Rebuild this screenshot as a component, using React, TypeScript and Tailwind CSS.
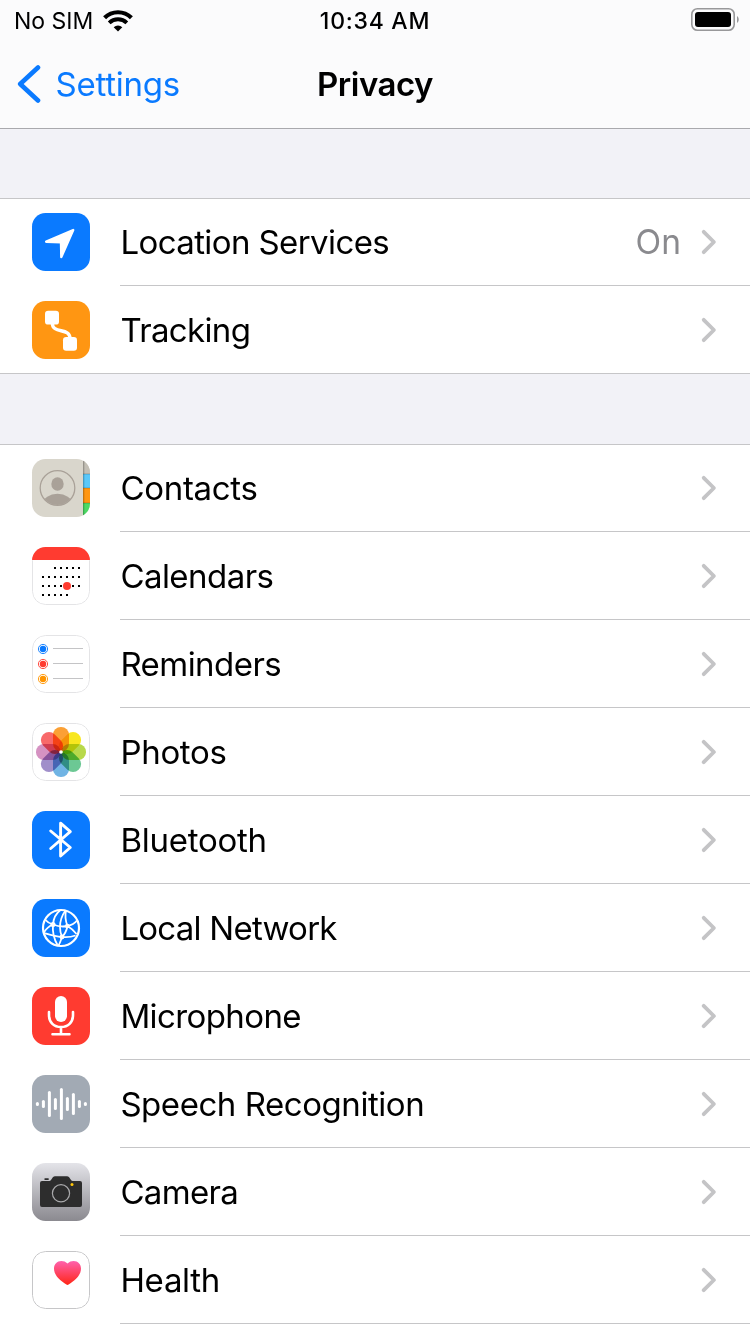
import type { ReactNode } from 'react';

interface RowProps {
  icon: ReactNode;
  label: string;
  value?: string;
  tracking?: string;
  last?: boolean;
}

// Rounded app tile that every list icon sits on
function Tile({ className, children }: { className: string; children: ReactNode }) {
  return (
    <div className={`mt-[15px] ml-8 h-[58px] w-[58px] shrink-0 overflow-hidden rounded-[13.5px] ${className}`}>
      <svg width="58" height="58" viewBox="0 0 58 58" fill="none">
        {children}
      </svg>
    </div>
  );
}

function LocationIcon() {
  return (
    <Tile className="bg-[#0a7aff]">
      <path d="M41.2 17 L14.2 28.7 L29 29.3 L29.3 44 Z" fill="#fff" stroke="#fff" strokeWidth="2.4" strokeLinejoin="round" />
    </Tile>
  );
}

function TrackingIcon() {
  return (
    <Tile className="bg-[#ff9612]">
      <rect x="13" y="9.8" width="14" height="13.8" rx="3.2" fill="#fff" />
      <rect x="31" y="36" width="14" height="13.8" rx="3.2" fill="#fff" />
      <path d="M20.3 22 C20.3 33.5 38 26 38 37.5" stroke="#fff" strokeWidth="3.4" />
    </Tile>
  );
}

function ContactsIcon() {
  return (
    <Tile className="bg-[#d9d6cc]">
      <defs>
        <clipPath id="contact-ring">
          <circle cx="25.5" cy="29" r="17" />
        </clipPath>
        <linearGradient id="tab-shade" x1="0" x2="1" y1="0" y2="0">
          <stop offset="0" stopColor="#000" stopOpacity="0.3" />
          <stop offset="1" stopColor="#000" stopOpacity="0" />
        </linearGradient>
      </defs>
      <rect x="51" width="7" height="15" fill="#c3bfb5" />
      <rect x="51" y="15" width="7" height="14" fill="#5ac8fa" />
      <rect x="51" y="29" width="7" height="15" fill="#ff9612" />
      <rect x="51" y="44" width="7" height="14" fill="#4cd964" />
      <path d="M51 15H58M51 29H58M51 44H58" stroke="#000" strokeOpacity="0.25" strokeWidth="0.8" />
      <rect x="51" width="2" height="58" fill="url(#tab-shade)" />
      <circle cx="25.5" cy="29" r="17.3" stroke="#a9a198" strokeWidth="1.3" />
      <ellipse cx="25.5" cy="25" rx="6.2" ry="6.8" fill="#a9a198" />
      <ellipse cx="25.5" cy="44.5" rx="14.5" ry="9.7" fill="#a9a198" clipPath="url(#contact-ring)" />
    </Tile>
  );
}

function CalendarIcon() {
  const rows = [
    { y: 21, from: 2, to: 6 },
    { y: 30, from: 0, to: 6 },
    { y: 39, from: 0, to: 6 },
    { y: 48, from: 0, to: 4 },
  ];

  return (
    <Tile className="bg-white">
      <rect x="0.5" y="0.5" width="57" height="57" rx="13" stroke="#e4e4e6" />
      <rect width="58" height="13" fill="#ff3b30" />
      {rows.map((row) =>
        Array.from({ length: row.to - row.from + 1 }, (_, i) => (
          <rect key={`${row.y}-${i}`} x={10 + (row.from + i) * 6} y={row.y - 1} width="2" height="2" fill="#000" />
        ))
      )}
      <circle cx="35" cy="39" r="4" fill="#ff3b30" />
    </Tile>
  );
}

function RemindersIcon() {
  const items = [
    { y: 14, color: '#0a7aff' },
    { y: 29, color: '#ff3b30' },
    { y: 44, color: '#ff9500' },
  ];

  return (
    <Tile className="bg-white">
      <rect x="0.5" y="0.5" width="57" height="57" rx="13" stroke="#e4e4e6" />
      {items.map((item) => (
        <g key={item.y}>
          <circle cx="11" cy={item.y} r="4.6" stroke={item.color} strokeWidth="0.9" />
          <circle cx="11" cy={item.y} r="3.2" fill={item.color} />
          <path d={`M21 ${item.y - 0.5}H51`} stroke="#c4c4c6" />
        </g>
      ))}
    </Tile>
  );
}

function PhotosIcon() {
  const petals = ['#fba035', '#f8e71f', '#b8d94a', '#6cc894', '#70b4e4', '#a08fca', '#d592c2', '#f8696a'];

  return (
    <Tile className="bg-white">
      <rect x="0.5" y="0.5" width="57" height="57" rx="13" stroke="#e4e4e6" />
      {petals.map((color, i) => (
        <rect
          key={color}
          className="mix-blend-multiply"
          x="21"
          y="4"
          width="16"
          height="24.5"
          rx="7.8"
          fill={color}
          transform={`rotate(${i * 45} 29 29)`}
        />
      ))}
      <circle cx="29" cy="29" r="1.8" fill="#fff" />
    </Tile>
  );
}

function BluetoothIcon() {
  return (
    <Tile className="bg-[#0a7aff]">
      <path
        d="M18.7 20 L38.3 36.5 L28.6 45 V12.2 L38.3 20.7 L18.7 37.5"
        stroke="#fff"
        strokeWidth="2.9"
        strokeLinecap="round"
        strokeLinejoin="round"
      />
    </Tile>
  );
}

function NetworkIcon() {
  return (
    <Tile className="bg-[#0a7aff]">
      <g stroke="#fff" strokeWidth="1.8">
        <circle cx="29" cy="29" r="18" strokeWidth="2.2" />
        <path d="M28.5 11 C24.5 14 21.5 19 21 25.5 C20.3 33 22 40 25.5 46" />
        <path d="M33.5 11.5 C29.5 17 28 22 28 28 C28 32 28.7 35 30 38" />
        <path d="M34 11.5 C33 16 33.5 22 35.5 27 C34.5 32 33 35 30 38 C29 41 28 44 26.5 46.5" />
        <path d="M13 20.5 C15 23 17.5 24.5 21 25.5 C26 27.5 31 28 35.5 27 C40 26 43 24 45 21.5" />
        <path d="M12 34 C17 35.5 22.5 37.5 30 38 C35 38.5 39.5 38 43.5 36.5" />
        <path d="M21 25.5 C17 27 14 30 11.8 33.5 M35.5 27 C39 29 42 32 44.5 35" />
      </g>
      <g fill="#fff">
        <circle cx="21" cy="25.5" r="2.5" />
        <circle cx="35.3" cy="27" r="2.3" />
        <circle cx="30" cy="38" r="2.4" />
      </g>
    </Tile>
  );
}

function MicrophoneIcon() {
  return (
    <Tile className="bg-[#ff3b30]">
      <rect x="23" y="9" width="12" height="26" rx="6" fill="#fff" />
      <path
        d="M17 25 V28 C17 35.5 22 40 29 40 C36 40 41 35.5 41 28 V25 M29 40 V47 M20.5 47.3 H37.5"
        stroke="#fff"
        strokeWidth="2.6"
        strokeLinecap="round"
      />
    </Tile>
  );
}

function SpeechIcon() {
  const bars = [4, 8, 26, 12, 32, 14, 22, 8, 4];

  return (
    <Tile className="bg-[#a2aab4]">
      {bars.map((height, i) => (
        <rect key={i} x={3.9 + i * 6} y={29 - height / 2} width="3" height={height} rx="1.5" fill="#fff" />
      ))}
    </Tile>
  );
}

function CameraIcon() {
  return (
    <Tile className="bg-linear-to-b from-[#e4e4e9] to-[#8b8a90]">
      <path
        d="M10 18 H17.5 C19.5 18 20 13.2 23 13.2 H35 C38 13.2 38.5 18 40.5 18 H48 Q50 18 50 20 V42 Q50 44 48 44 H10 Q8 44 8 42 V20 Q8 18 10 18 Z"
        fill="#2d2d2d"
      />
      <rect x="12.3" y="15.2" width="4.6" height="1.8" rx="0.9" fill="#2d2d2d" />
      <circle cx="29" cy="30.3" r="8.6" stroke="#a9a9ab" strokeWidth="1.2" />
      <circle cx="40" cy="21.5" r="1.5" fill="#ffc60a" />
    </Tile>
  );
}

function HealthIcon() {
  return (
    <Tile className="bg-white">
      <defs>
        <linearGradient id="heart" x1="0" x2="0" y1="0" y2="1">
          <stop offset="0" stopColor="#ff61ad" />
          <stop offset="1" stopColor="#ff2616" />
        </linearGradient>
      </defs>
      <rect x="0.5" y="0.5" width="57" height="57" rx="13" stroke="#c6c6c8" />
      <path
        d="M35.5 12.6 C37.2 10.8 39.3 10 41.6 10 C46 10 49 13.3 49 17.5 C49 25 42 30 36.6 33.6 Q35.5 34.3 34.4 33.6 C29 30 22 25 22 17.5 C22 13.3 25 10 29.4 10 C31.7 10 33.8 10.8 35.5 12.6 Z"
        fill="url(#heart)"
      />
    </Tile>
  );
}

function Chevron() {
  return (
    <svg className="mr-[33px] shrink-0" width="16" height="26" viewBox="0 0 16 26" fill="none">
      <path d="M2.7 2.8 L12.9 13 L2.7 23.2" stroke="#c4c4c6" strokeWidth="3.8" strokeLinecap="round" strokeLinejoin="round" />
    </svg>
  );
}

function Row({ icon, label, value, tracking = 'tracking-[-0.3px]', last = false }: RowProps) {
  return (
    <li className={`flex h-[88px] first:-mt-px ${last ? 'border-b border-[#c6c6c8]' : ''}`}>
      {icon}
      <div className={`ml-[30px] flex flex-1 items-center ${last ? '' : 'border-b border-[#c6c6c8]'}`}>
        <span className={`flex-1 pl-[0.4px] text-[33px] leading-[40px] ${tracking}`}>{label}</span>
        {value && <span className="mr-5 text-[33.5px] leading-[40px] text-[#8a8a8e]">{value}</span>}
        <Chevron />
      </div>
    </li>
  );
}

function StatusBar() {
  return (
    <div className="flex h-10 items-center justify-between pt-0.5">
      <div className="flex w-[250px] items-center pl-[14px]">
        <span className="text-[23px] leading-10">No SIM</span>
        <svg className="ml-[10px]" width="30" height="22" viewBox="0 0 30 22" fill="none">
          <path d="M1.6 7.8 A19 19 0 0 1 28.4 7.8" stroke="#000" strokeWidth="4.2" />
          <path d="M6.2 12.8 A12.6 12.6 0 0 1 23.8 12.8" stroke="#000" strokeWidth="3.9" />
          <path d="M15 21.6 L10.7 17.3 A6.2 6.2 0 0 1 19.3 17.3 Z" fill="#000" />
        </svg>
      </div>
      <span className="text-[23px] leading-10 font-medium tracking-[0.75px]">10:34 AM</span>
      <div className="-mt-0.5 flex w-[250px] justify-end pr-[11px]">
        <svg width="48" height="24" viewBox="0 0 48 24" fill="none">
          <rect x="0.8" y="0.8" width="42.4" height="21.4" rx="5.6" stroke="#98989a" strokeWidth="1.6" />
          <rect x="4" y="4" width="36" height="15" rx="3" fill="#000" />
          <path d="M46 8 C48.3 9.5 48.3 13.5 46 15 Z" fill="#98989a" />
        </svg>
      </div>
    </div>
  );
}

function NavBar() {
  return (
    <div className="grid h-[88px] grid-cols-3 items-center">
      <div className="flex items-center pl-[17px] text-[#0a7aff]">
        <svg width="24" height="38" viewBox="0 0 24 38" fill="none">
          <path d="M21 2.5 L3.2 19 L21 35.5" stroke="currentColor" strokeWidth="4.6" strokeLinecap="round" strokeLinejoin="round" />
        </svg>
        <span className="ml-[14.5px] text-[33px] leading-10 tracking-[-0.25px]">Settings</span>
      </div>
      <h1 className="text-center text-[33px] leading-10 font-semibold tracking-[-0.5px]">Privacy</h1>
    </div>
  );
}

export default function App() {
  return (
    <div className="h-[1334px] w-[750px] overflow-hidden bg-[#f2f2f7] font-['Inter','Liberation_Sans',sans-serif] text-black">
      <header className="h-[129px] border-b border-[#a9a9ad] bg-[#fbfbfc]">
        <StatusBar />
        <NavBar />
      </header>

      <ul className="mt-[69px] border-t border-[#c6c6c8] bg-white">
        <Row icon={<LocationIcon />} label="Location Services" value="On" tracking="tracking-[-0.6px]" />
        <Row icon={<TrackingIcon />} label="Tracking" tracking="tracking-[-0.65px]" last />
      </ul>

      <ul className="mt-[70px] h-[890px] border-t border-[#c6c6c8] bg-white">
        <Row icon={<ContactsIcon />} label="Contacts" />
        <Row icon={<CalendarIcon />} label="Calendars" tracking="tracking-[-0.55px]" />
        <Row icon={<RemindersIcon />} label="Reminders" tracking="tracking-[-0.55px]" />
        <Row icon={<PhotosIcon />} label="Photos" />
        <Row icon={<BluetoothIcon />} label="Bluetooth" tracking="tracking-[-0.25px]" />
        <Row icon={<NetworkIcon />} label="Local Network" tracking="tracking-[-0.75px]" />
        <Row icon={<MicrophoneIcon />} label="Microphone" tracking="tracking-[-0.6px]" />
        <Row icon={<SpeechIcon />} label="Speech Recognition" tracking="tracking-[-0.45px]" />
        <Row icon={<CameraIcon />} label="Camera" tracking="tracking-[-0.65px]" />
        <Row icon={<HealthIcon />} label="Health" />
      </ul>
    </div>
  );
}
